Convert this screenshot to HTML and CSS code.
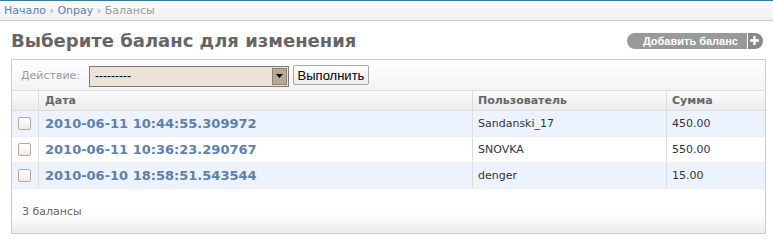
FILE: index.html
```html
<!DOCTYPE html>
<html lang="ru">
<head>
<meta charset="utf-8">
<title>Балансы</title>
<link rel="stylesheet" href="styles.css">
</head>
<body>
<div class="topline"></div>
<div class="breadcrumbs"><a href="#">Начало</a> › <a href="#">Onpay</a> › Балансы</div>
<div class="content">
  <div class="head">
    <h1>Выберите баланс для изменения</h1>
    <a class="addlink" href="#"><span class="addtext">Добавить баланс</span><span class="addplus"><svg width="11" height="11" viewBox="0 0 11 11"><path d="M5.5 1v9M1 5.5h9" stroke="#fff" stroke-width="2.4"/></svg></span></a>
  </div>
  <div class="module">
    <div class="actions">
      <span class="label">Действие:</span>
      <div class="select"><span class="selval">---------</span><span class="selarrow"><svg width="7" height="4" viewBox="0 0 7 4"><path d="M0 0h7L3.5 4z" fill="#000"/></svg></span></div>
      <button class="go" type="button">Выполнить</button>
    </div>
    <div class="table">
      <div class="row thead">
        <div class="c0"></div>
        <div class="c1">Дата</div>
        <div class="c2">Пользователь</div>
        <div class="c3">Сумма</div>
      </div>
      <div class="row odd">
        <div class="c0"><span class="cb"></span></div>
        <div class="c1"><a href="#">2010-06-11 10:44:55.309972</a></div>
        <div class="c2">Sandanski_17</div>
        <div class="c3">450.00</div>
      </div>
      <div class="row">
        <div class="c0"><span class="cb"></span></div>
        <div class="c1"><a href="#">2010-06-11 10:36:23.290767</a></div>
        <div class="c2">SNOVKA</div>
        <div class="c3">550.00</div>
      </div>
      <div class="row odd">
        <div class="c0"><span class="cb"></span></div>
        <div class="c1"><a href="#">2010-06-10 18:58:51.543544</a></div>
        <div class="c2">denger</div>
        <div class="c3">15.00</div>
      </div>
    </div>
    <div class="paginator">3 балансы</div>
  </div>
</div>
</body>
</html>
```
FILE: styles.css
```css
* { box-sizing: border-box; }
body {
  margin: 0;
  font-family: "DejaVu Sans", Verdana, sans-serif;
  font-size: 12px;
  color: #333;
  background: #fff;
}
a { color: #5b80b2; text-decoration: none; }
.topline { height: 1px; background: #417690; }
.breadcrumbs {
  height: 20px;
  line-height: 20px;
  padding: 0 4px;
  font-size: 11px;
  color: #999;
  background: linear-gradient(#fbfbfb, #f0f0f0);
  border-bottom: 1px solid #c9c9c9;
}
.content { padding: 0 7px 0 11px; }
.head {
  display: flex;
  justify-content: space-between;
  align-items: center;
  margin-top: 9px;
  margin-bottom: 8px;
}
h1 {
  margin: 0;
  font-size: 18px;
  line-height: 21px;
  font-weight: bold;
  color: #666;
}
.addlink {
  display: flex;
  height: 16px;
  margin-right: 3px;
  font-family: "Liberation Sans", Arial, sans-serif;
  font-weight: bold;
  font-size: 11px;
  color: #fff;
}
.addtext {
  background: #999;
  border-radius: 8px 0 0 8px;
  padding: 0 9px 0 16px;
  line-height: 16px;
}
.addplus {
  width: 16px;
  background: #888;
  border-left: 1px solid #fff;
  border-radius: 0 8px 8px 0;
  display: flex;
  align-items: center;
  justify-content: center;
  padding-right: 2px;
}
.module {
  border: 1px solid #ccc;
  width: 755px;
}
.actions {
  height: 31px;
  display: flex;
  align-items: center;
  padding-left: 9px;
  border-bottom: 1px solid #ddd;
  background: linear-gradient(#fff, #f3f3f3);
}
.label { font-size: 11px; color: #999; width: 68px; }
.select {
  width: 200px;
  height: 21px;
  margin-top: 2px;
  border: 1px solid #7a7a7a;
  background: #ebe4d6;
  display: flex;
  align-items: center;
  justify-content: space-between;
}
.selval { padding-left: 5px; font-size: 12px; color: #000; font-family: "Liberation Sans", Arial, sans-serif; }
.selarrow {
  width: 15px;
  height: 17px;
  margin-right: 1px;
  background: #b6aa92;
  border: 1px solid #8e846f;
  display: flex;
  align-items: center;
  justify-content: center;
}
.go {
  margin-left: 4px;
  height: 20px;
  width: 76px;
  padding: 0;
  border: 1px solid #a8a8a8;
  border-radius: 2px;
  background: linear-gradient(#fefefe, #ececec);
  font-family: "Liberation Sans", Arial, sans-serif;
  font-size: 13px;
  color: #000;
}
.row {
  display: grid;
  grid-template-columns: 26px 434px 194px 99px;
  height: 26px;
  border-bottom: 1px solid #eee;
}
.row > div { display: flex; align-items: center; padding-left: 6px; }
.row > div + div { border-left: 1px solid #ddd; }
.row > .c2, .row > .c3 { padding-left: 5px; font-size: 11px; }
.thead {
  height: 20px;
  border-bottom: 1px solid #ddd;
  background: linear-gradient(#fcfcfc, #ebebeb);
}
.thead > div { font-size: 11px; font-weight: bold; color: #666; }
.odd { background: #edf3fe; }
.c1 a { font-weight: bold; font-size: 13px; }
.cb {
  width: 13px;
  height: 13px;
  border: 1px solid #b3aa9a;
  border-radius: 2px;
  background: linear-gradient(#fff, #eeece8);
}
.paginator {
  height: 44px;
  padding-left: 10px;
  display: flex;
  align-items: center;
  font-size: 11px;
  color: #666;
  background: linear-gradient(#fff 55%, #ececec);
}
```
